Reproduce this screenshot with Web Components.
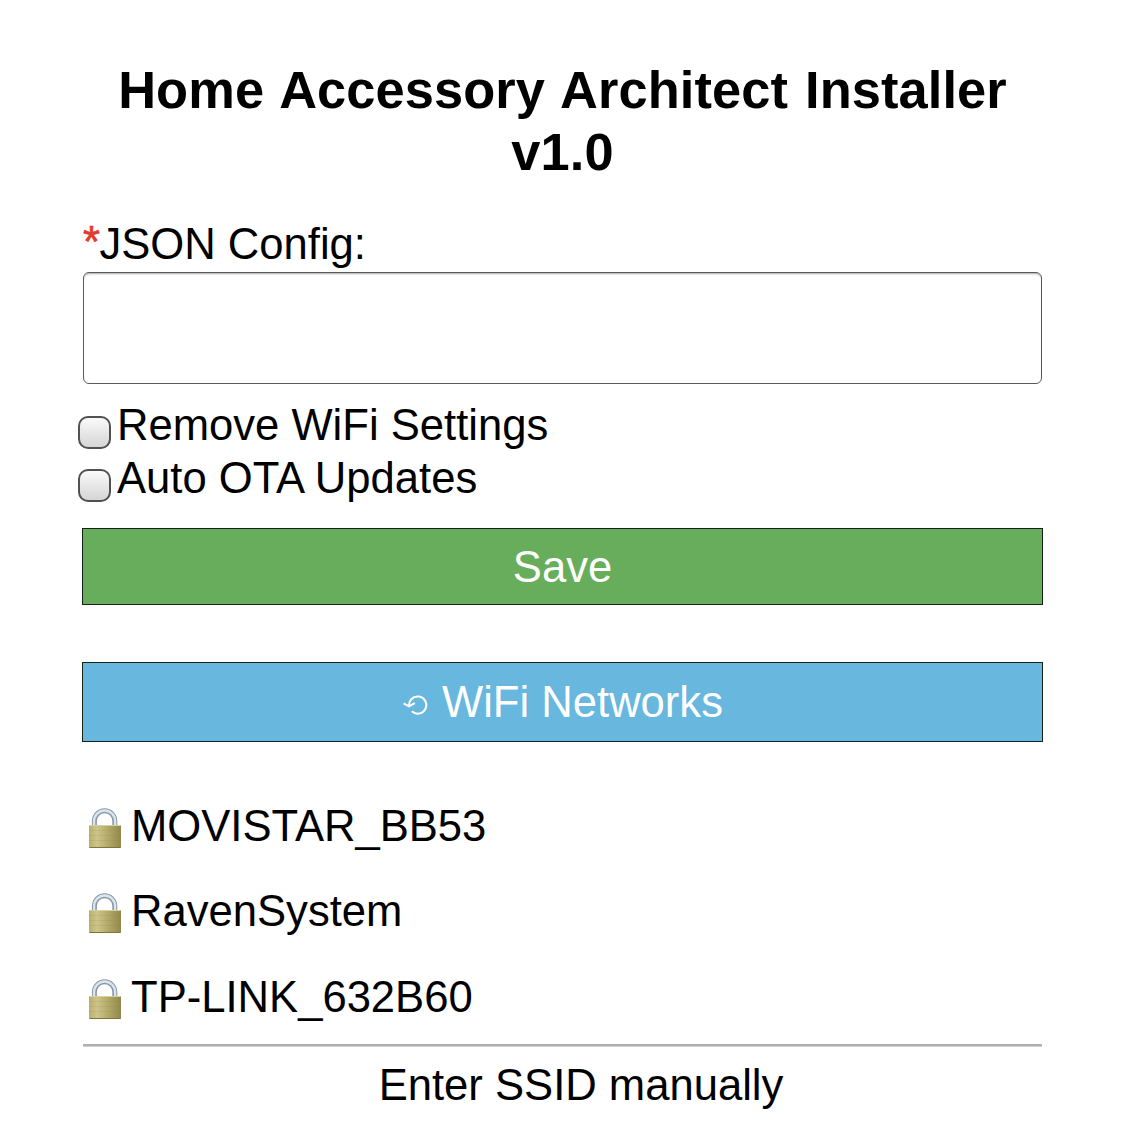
<!DOCTYPE html>
<html lang="en">
<head>
<meta charset="utf-8">
<title>Home Accessory Architect Installer</title>
<style>
html,body{margin:0;background:#fff}
body{font-family:"Liberation Sans",Arial,sans-serif;font-size:43.600px;line-height:50px;color:#000;height:1148px;overflow:hidden}
</style>
</head>
<body>
<haa-installer></haa-installer>
<script>
const define = (name, html) => customElements.define(name, class extends HTMLElement {
  constructor() {
    super();
    this.attachShadow({mode: 'open'}).innerHTML = html;
  }
});

define('haa-title', `<style>
:host{display:block;text-align:center}
h1{margin:0;font-size:52.400px;line-height:62px;font-weight:700;letter-spacing:.1px;word-spacing:2.300px}
</style><h1><slot></slot></h1>`);

define('haa-field', `<style>
:host{display:block}
label{display:block;white-space:nowrap}
.req{color:#e23b2e;-webkit-text-stroke:.7px #e23b2e;vertical-align:2px;line-height:1;margin-right:-.5px}
.box{box-sizing:border-box;height:112px;margin-top:3px;border:1px solid #5a5a5a;border-radius:6px;background:#fff;box-shadow:inset 0 2px 2px -1px #aaa}
</style><label><span class="req">*</span><slot></slot></label><div class="box"></div>`);

define('haa-check', `<style>
:host{display:flex;height:53px;margin-left:-5px;white-space:nowrap}
.box{box-sizing:border-box;width:33px;height:33px;margin:16px 6px 0 0;border:2px solid #515153;border-radius:10px;background:linear-gradient(#fafafa,#d5d5d5)}
</style><span class="box"></span><span class="text"><slot></slot></span>`);

define('haa-button', `<style>
:host{display:block}
button{box-sizing:border-box;display:flex;justify-content:center;align-items:center;width:100%;height:100%;margin:0;padding:var(--nudge) 0 0;border:1px solid #142218;border-radius:0;background:var(--fill);color:#fff;font:inherit;white-space:pre}
</style><button><slot></slot></button>`);

define('haa-refresh', `<style>
:host{display:block;width:25px;height:24px;margin:6px 14px 0 1px}
svg{display:block}
</style><svg width="25" height="24" viewBox="0 0 25 24" fill="none" stroke="#fff" stroke-width="2"><path d="M6.200 13.500A8.600 8.600 0 1 1 8.800 18.300"/><path d="M.6 10.400l5.400 3 5.800-3.300"/></svg>`);

define('haa-lock', `<style>
:host{display:block;width:34px;height:41px}
svg{display:block}
</style><svg width="34" height="41" viewBox="0 0 34 41">
<defs>
<linearGradient id="body" x1="0" x2="1"><stop offset="0" stop-color="#b8ae70"/><stop offset=".25" stop-color="#cdc589"/><stop offset=".6" stop-color="#b2a868"/><stop offset="1" stop-color="#91884c"/></linearGradient>
</defs>
<path d="M6.400 19V13a10.200 10.200 0 0 1 20.400 0V19" fill="none" stroke="#8798a8" stroke-width="5"/>
<path d="M6.100 19V13a10.500 10.500 0 0 1 21 0V19" fill="none" stroke="#dbe5ed" stroke-width="2.400"/>
<rect x="1" y="17" width="32" height="23" rx="1" fill="url(#body)"/>
<path d="M1.500 17.500h31" stroke="#d8d19c" stroke-width="1"/>
<path d="M1 22.500h32M1 27.500h32M1 32.500h32" stroke="#8e8549" stroke-opacity=".16"/>
<path d="M1.500 39.500h31" stroke="#7e753b" stroke-width="1"/>
</svg>`);

define('haa-network', `<style>
:host{display:flex;height:50px;white-space:nowrap}
haa-lock{margin:7px 9px 0 5px}
</style><haa-lock></haa-lock><span><slot></slot></span>`);

define('haa-installer', `<style>
:host{display:flex;flex-direction:column;box-sizing:border-box;width:1125px;padding:59px 83px 0 83px}
haa-field{margin-top:36px}
.checks{margin-top:16px}
.save{--fill:#67ad5b;--nudge:1px;height:77px;margin:22px -1px 0}
.scan{--fill:#67b7de;--nudge:0px;height:80px;margin:57px -1px 0}
.networks{display:flex;flex-direction:column;gap:35.400px;margin-top:59px}
hr{width:100%;height:2px;margin:22.200px 0 0;border:0;border-bottom:1px solid #d0d0d0;box-sizing:content-box;background:#b0b0b0}
.manual{margin:13px 0 0;padding-left:37px;text-align:center;white-space:nowrap}
</style>
<haa-title>Home Accessory Architect Installer v1.0</haa-title>
<haa-field>JSON Config:</haa-field>
<div class="checks"><haa-check>Remove WiFi Settings</haa-check><haa-check>Auto OTA Updates</haa-check></div>
<haa-button class="save">Save</haa-button>
<haa-button class="scan"><haa-refresh></haa-refresh>WiFi Networks</haa-button>
<div class="networks"><haa-network>MOVISTAR_BB53</haa-network><haa-network>RavenSystem</haa-network><haa-network>TP-LINK_632B60</haa-network></div>
<hr>
<div class="manual">Enter SSID manually</div>`);
</script>
</body>
</html>
